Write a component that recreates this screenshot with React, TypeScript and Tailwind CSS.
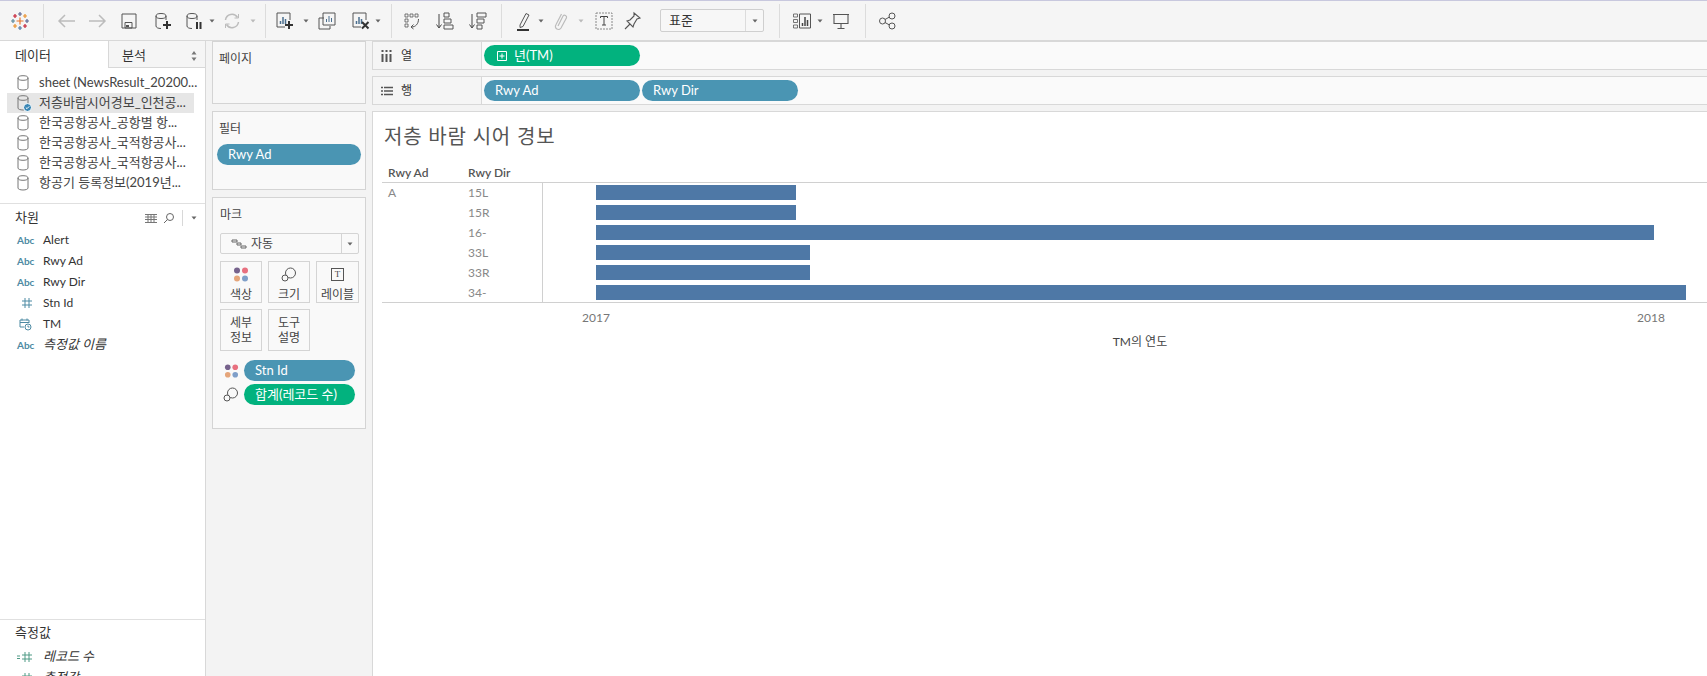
import type { ReactNode } from "react";

const FONT = "font-['Lato','Noto_Sans_CJK_KR',sans-serif]";

type IconProps = { className?: string };

function Ico({ className = "", children }: { className?: string; children: ReactNode }) {
  return (
    <svg viewBox="0 0 20 20" fill="none" stroke="#555" strokeWidth="1" className={`h-5 w-5 shrink-0 ${className}`}>
      {children}
    </svg>
  );
}

function Caret({ className = "", light = false }: { className?: string; light?: boolean }) {
  return (
    <svg viewBox="0 0 6 4" className={`h-1 w-1.5 shrink-0 ${className}`}>
      <path d="M0.5 0.5h5L3 3.5z" fill={light ? "#bbb" : "#666"} />
    </svg>
  );
}

function Sep({ className = "" }: IconProps) {
  return <div className={`h-[34px] w-px shrink-0 bg-[#dcdcdc] ${className}`} />;
}

function TableauLogo({ className = "" }: IconProps) {
  const plus = (x: number, y: number, r: number, c: string) => (
    <path key={`${x}-${y}`} d={`M${x - r} ${y}h${2 * r}M${x} ${y - r}v${2 * r}`} stroke={c} strokeWidth="1.2" />
  );
  return (
    <svg viewBox="0 0 20 20" fill="none" className={`h-5 w-5 shrink-0 ${className}`}>
      {plus(10, 10, 3.5, "#e8762c")}
      {plus(10, 3, 2, "#5b6591")}
      {plus(10, 17, 2, "#4e79a7")}
      {plus(3, 10, 2, "#59879b")}
      {plus(17, 10, 2, "#5b6591")}
      {plus(5, 5, 2, "#c72035")}
      {plus(15, 5, 2, "#eb912b")}
      {plus(5, 15, 2, "#eb912b")}
      {plus(15, 15, 2, "#c72035")}
    </svg>
  );
}

function Cyl({ stroke = "#555" }: { stroke?: string }) {
  return (
    <>
      <ellipse cx="8" cy="5" rx="5" ry="2.5" stroke={stroke} />
      <path d="M3 5v10c0 1.5 2 2.5 5 2.5M13 5v4" stroke={stroke} />
    </>
  );
}

function DataSourceIcon({ active = false }: { active?: boolean }) {
  return (
    <svg viewBox="0 0 16 18" fill="none" className="h-[18px] w-4 shrink-0">
      <ellipse cx="7" cy="4" rx="5" ry="2.3" stroke="#777" />
      <path d="M2 4v10c0 1.200 2.200 2 5 2s5-.8 5-2V4" stroke="#777" />
      {active && (
        <>
          <circle cx="11.500" cy="13.500" r="4" fill="#3a87b5" stroke="#fff" />
          <path d="M9.800 13.500l1.200 1.200 2.200-2.300" stroke="#fff" />
        </>
      )}
    </svg>
  );
}

function Chart({ className = "", children }: { className?: string; children?: ReactNode }) {
  return (
    <Ico className={className}>
      <path d="M15 9V2H2v14h8" />
      <path d="M5.500 13v-3M8 13V6M10.500 13V8" strokeWidth="1.500" stroke="#4b6f8f" />
      {children}
    </Ico>
  );
}

function Toolbar() {
  return (
    <div className="flex h-[41px] shrink-0 items-center border-y border-t-[#c8c8de] border-b-[#d8d8d8] bg-[#f5f5f5]">
      <TableauLogo className="ml-2.5" />
      <Sep className="ml-[13px]" />
      <Ico className="ml-3">
        <path d="M19 10H3M9 4l-6 6 6 6" stroke="#bcbcbc" strokeWidth="1.500" />
      </Ico>
      <Ico className="ml-3">
        <path d="M1 10h16M11 4l6 6-6 6" stroke="#bcbcbc" strokeWidth="1.500" />
      </Ico>
      <Ico className="ml-[11px]">
        <path d="M3 3h14v14H3z" />
        <path d="M6 11.500h7V17H6z" />
        <path d="M7 15h3" strokeWidth="2" />
      </Ico>
      <Ico className="ml-[14px]">
        <Cyl />
        <path d="M14 10v8M10 14h8" stroke="#333" strokeWidth="2" />
      </Ico>
      <Ico className="ml-[11px]">
        <Cyl />
        <path d="M13 11v7M16.500 11v7" stroke="#333" strokeWidth="2" />
      </Ico>
      <Caret className="ml-[5px]" />
      <Ico className="ml-[7px]">
        <path d="M3.500 9a6.500 6.500 0 0 1 12-2.500M16.500 11a6.500 6.500 0 0 1-12 2.500" stroke="#bcbcbc" strokeWidth="1.500" />
        <path d="M16.500 3v4h-4M3.500 17v-4h4" stroke="#bcbcbc" />
      </Ico>
      <Caret light className="ml-2" />
      <Sep className="ml-[9px]" />
      <Chart className="ml-[9px]">
        <path d="M14 10v8M10 14h8" stroke="#333" strokeWidth="2" />
      </Chart>
      <Caret className="ml-[8px]" />
      <Ico className="ml-[8px]">
        <path d="M7 7H2v11h11v-3" />
        <path d="M6 2h12v12H6z" />
        <path d="M9.500 11V8M12 11V5M14.500 11V7" stroke="#4b6f8f" />
      </Ico>
      <Chart className="ml-[14px]">
        <path d="M11 11l6.500 6.500M17.500 11L11 17.500" stroke="#333" strokeWidth="2" />
      </Chart>
      <Caret className="ml-1" />
      <Sep className="ml-[10px]" />
      <Ico className="ml-[10px]">
        <path d="M3 3h3v3H3zM8 3h3v3H8zM13 3h3v3h-3zM3 8h3v3H3zM3 13h3v3H3z" strokeWidth="0.800" />
        <path d="M16.500 8c0 5-3 8-7 8M11.500 13.500L9 16l2.500 2" />
      </Ico>
      <Ico className="ml-[13px]">
        <path d="M4 3v13M1.500 13.500L4 17l2.500-3.500" stroke="#444" />
        <path d="M9 2h5v4H9zM9 8h7v4H9zM9 14h9v4H9z" />
      </Ico>
      <Ico className="ml-[13px]">
        <path d="M4 3v13M1.500 13.500L4 17l2.500-3.500" stroke="#444" />
        <path d="M9 2h9v4H9zM9 8h7v4H9zM9 14h5v4H9z" />
      </Ico>
      <Sep className="ml-[13px]" />
      <Ico className="ml-3">
        <path d="M6 14L12 2.500l3 1.500-6 11.500-3 1z" />
        <path d="M3 19h12" stroke="#333" strokeWidth="2" />
      </Ico>
      <Caret className="ml-1" />
      <Ico className="ml-[7px]">
        <path
          d="M7 15L12 5a2 2 0 0 1 3.500 1.800L10 17a3 3 0 0 1-5.200-3L10.500 3"
          stroke="#bcbcbc"
          strokeWidth="1.200"
        />
      </Ico>
      <Caret light className="ml-[7px]" />
      <Ico className="ml-[10px]">
        <path d="M2 2h16v16H2z" strokeDasharray="2 1" stroke="#888" />
        <path d="M6.500 7V5.500h7V7M10 5.500V14M8 14h4" stroke="#444" />
      </Ico>
      <Ico className="ml-[9px]">
        <path d="M11 2l6 5-3 1-3 5-1 3-6-6 3-1 4-4zM7 13l-5 5" strokeWidth="1.100" />
      </Ico>
      <div className="ml-[17px] flex h-[23px] w-[104px] shrink-0 items-center rounded-[2px] border border-[#cfcfcf] bg-[#f7f7f7] text-[13px] text-[#333]">
        <span className="flex-1 pl-2">표준</span>
        <div className="flex h-full w-[18px] items-center justify-center border-l border-[#dcdcdc]">
          <Caret />
        </div>
      </div>
      <Sep className="ml-[15px]" />
      <Ico className="ml-3">
        <path d="M1.500 3h4v3h-4zM1.500 8.500h4v3h-4zM1.500 14h4v3h-4z" strokeWidth="0.800" />
        <path d="M7.500 3h11v14h-11z" />
        <path d="M10.500 15v-3M13 15V6M15.500 15V9" strokeWidth="1.500" stroke="#444" />
      </Ico>
      <Caret className="ml-[5px]" />
      <Ico className="ml-[8px]">
        <path d="M2 3.500h16M3 3.500v9h14v-9M10 12.500V17M6.500 17.500h7" strokeWidth="1.100" />
      </Ico>
      <Sep className="ml-[14px]" />
      <Ico className="ml-3">
        <circle cx="4.500" cy="10" r="3" />
        <circle cx="14" cy="5" r="3" />
        <circle cx="14" cy="15" r="3" />
        <path d="M7 8.500l4.500-2.500M7 11.500l4.500 2.500" />
      </Ico>
    </div>
  );
}

const DATA_SOURCES = [
  "sheet (NewsResult_20200...",
  "저층바람시어경보_인천공...",
  "한국공항공사_공항별 항...",
  "한국공항공사_국적항공사...",
  "한국공항공사_국적항공사...",
  "항공기 등록정보(2019년...",
];

function AbcTag() {
  return <span className="w-[17px] text-[10px] font-bold leading-none text-[#4d8aa3]">Abc</span>;
}

function HashTag({ color = "#4d8aa3", calc = false }: { color?: string; calc?: boolean }) {
  return (
    <svg viewBox="0 0 17 12" fill="none" stroke={color} className="h-3 w-[17px]">
      <path d="M5 4h10M5 8h10M8 1v10M12 1v10" />
      {calc && <path d="M0 5h3M0 7.500h3" />}
    </svg>
  );
}

function DateTag() {
  return (
    <svg viewBox="0 0 17 14" fill="none" stroke="#4d8aa3" className="h-3.5 w-[17px]">
      <path d="M7 10H3V3h9v3M3 5.500h9M5 1.500v2M10 1.500v2" />
      <circle cx="11" cy="10" r="3" />
      <path d="M11 8.500V10h1.500" />
    </svg>
  );
}

function Field({ tag, label, italic = false }: { tag: ReactNode; label: string; italic?: boolean }) {
  return (
    <div className={`flex h-[21px] items-center pl-[17px] text-[#333] ${italic ? "text-[13px]" : "text-[12px]"}`}>
      <div className="flex w-[26px] shrink-0 items-center">{tag}</div>
      <span className={italic ? "italic" : ""}>{label}</span>
    </div>
  );
}

function Sidebar() {
  return (
    <div className="flex w-[206px] shrink-0 flex-col border-r border-[#d8d8d8] bg-white text-[#333]">
      <div className="flex h-[27px] shrink-0 text-[13px]">
        <div className="flex w-[108px] items-center pl-[15px] pt-[3px]">데이터</div>
        <div className="flex flex-1 items-center justify-between border-b border-l border-[#d8d8d8] bg-[#f5f5f5] pl-[13px] pr-2 pt-[3px]">
          <span>분석</span>
          <svg viewBox="0 0 6 10" className="h-2.5 w-1.5">
            <path d="M3 0l2.500 3.500h-5zM3 10L.5 6.500h5z" fill="#777" />
          </svg>
        </div>
      </div>
      <div className="shrink-0 pt-[5px]">
        {DATA_SOURCES.map((name, i) => (
          <div
            key={i}
            className={`mx-[7px] flex h-5 w-[187px] items-center gap-[7px] pl-[9px] text-[13px] text-[#444] ${i === 1 ? "bg-[#e6e6e6]" : ""}`}
          >
            <DataSourceIcon active={i === 1} />
            <span className="whitespace-nowrap">{name}</span>
          </div>
        ))}
      </div>
      <div className="mt-[10px] flex-1 border-t border-[#e0e0e0]">
        <div className="flex h-[27px] items-center pl-[15px] pr-2 pt-[1px]">
          <span className="flex-1 text-[13px]">차원</span>
          <svg viewBox="0 0 12 9" fill="none" stroke="#777" className="h-[9px] w-3">
            <path d="M0 .5h12M0 3h12M0 5.500h12M0 8.500h12M3 0v9M6 0v9M9 0v9" />
          </svg>
          <svg viewBox="0 0 12 12" fill="none" stroke="#666" className="ml-[6px] h-3 w-3">
            <circle cx="7" cy="5" r="3.500" />
            <path d="M4.500 7.500L1 11" />
          </svg>
          <div className="ml-[7px] h-4 w-px bg-[#d8d8d8]" />
          <Caret className="ml-2" />
        </div>
        <div className="-mt-[2px]">
          <Field tag={<AbcTag />} label="Alert" />
          <Field tag={<AbcTag />} label="Rwy Ad" />
          <Field tag={<AbcTag />} label="Rwy Dir" />
          <Field tag={<HashTag />} label="Stn Id" />
          <Field tag={<DateTag />} label="TM" />
          <Field tag={<AbcTag />} label="측정값 이름" italic />
        </div>
      </div>
      <div className="h-[57px] shrink-0 overflow-hidden border-t border-[#e0e0e0]">
        <div className="flex h-[26px] items-center pl-[15px] text-[13px]">측정값</div>
        <Field tag={<HashTag color="#4f9a85" calc />} label="레코드 수" italic />
        <Field tag={<HashTag color="#4f9a85" />} label="측정값" italic />
      </div>
    </div>
  );
}

function Pill({ color, className = "", children }: { color: "blue" | "green"; className?: string; children: ReactNode }) {
  const bg = color === "blue" ? "bg-[#4a95b3]" : "bg-[#02b27e]";
  return (
    <div className={`flex h-[21px] shrink-0 items-center rounded-full text-[13px] text-white ${bg} ${className}`}>
      {children}
    </div>
  );
}

function Dots({ small = false }: { small?: boolean }) {
  return (
    <svg viewBox="0 0 16 15" className={small ? "h-[14px] w-[15px]" : "h-[15px] w-4"}>
      <circle cx="4" cy="3.500" r="3" fill="#76628c" />
      <circle cx="12" cy="3.500" r="3" fill="#e8707f" />
      <circle cx="4" cy="11.500" r="3" fill="#e5a57a" />
      <circle cx="12" cy="11.500" r="3" fill="#7f9fc9" />
    </svg>
  );
}

function SizeIcon() {
  return (
    <svg viewBox="0 0 16 15" fill="none" stroke="#555" className="h-[15px] w-4">
      <circle cx="9.500" cy="6" r="5" />
      <circle cx="4" cy="11" r="3" fill="#f8f8f8" />
    </svg>
  );
}

function MarkButton({ icon, label }: { icon: ReactNode; label: string }) {
  return (
    <div className="flex h-[42px] flex-col items-center border border-[#d4d4d4] pt-[5px] text-[12px] leading-[14px] text-[#444]">
      <div className="flex h-[15px] items-center">{icon}</div>
      <span className="mt-[6px]">{label}</span>
    </div>
  );
}

function TextMarkButton({ top, bottom }: { top: string; bottom: string }) {
  return (
    <div className="flex h-[42px] flex-col items-center justify-center border border-[#d4d4d4] text-[12px] leading-[15px] text-[#444]">
      <span>{top}</span>
      <span>{bottom}</span>
    </div>
  );
}

function CardsColumn() {
  return (
    <div className="ml-[6px] flex w-[154px] shrink-0 flex-col gap-[7px]">
      <div className="h-[63px] border border-[#d4d4d4] bg-[#f7f7f7] pl-[6px] pt-[8px] text-[12px] text-[#444]">
        페이지
      </div>
      <div className="h-[79px] border border-[#d4d4d4] bg-[#f9f9f9] pl-[6px] pt-[8px] text-[12px] text-[#444]">
        <div>필터</div>
        <Pill color="blue" className="-ml-[2px] mt-[6px] w-[144px] pl-[11px]">
          Rwy Ad
        </Pill>
      </div>
      <div className="h-[232px] border border-[#d4d4d4] bg-[#f9f9f9] pl-[7px] pr-[6px] pt-[8px] text-[12px] text-[#444]">
        <div>마크</div>
        <div className="mt-[9px] flex h-[21px] w-[139px] items-center rounded-[2px] border border-[#d4d4d4]">
          <svg viewBox="0 0 16 10" fill="none" stroke="#666" className="ml-[10px] h-2.5 w-4">
            <path d="M1 1h5v2H1zM6 4h4v2H6zM10 7h5v2h-5z" />
          </svg>
          <span className="ml-[4px] flex-1 text-[12px]">자동</span>
          <div className="flex h-full w-[17px] items-center justify-center border-l border-[#d4d4d4]">
            <Caret />
          </div>
        </div>
        <div className="mt-[7px] grid w-[139px] grid-cols-[42px_42px_43px] gap-x-[6px] gap-y-[6px]">
          <MarkButton icon={<Dots />} label="색상" />
          <MarkButton icon={<SizeIcon />} label="크기" />
          <MarkButton
            icon={
              <div className="flex h-[13px] w-[13px] items-center justify-center border border-[#555] font-['Liberation_Serif',serif] text-[9px] leading-none">
                T
              </div>
            }
            label="레이블"
          />
          <TextMarkButton top="세부" bottom="정보" />
          <TextMarkButton top="도구" bottom="설명" />
        </div>
        <div className="mt-[9px] flex items-center">
          <div className="flex w-6 justify-center pr-[2px]">
            <Dots small />
          </div>
          <Pill color="blue" className="w-[111px] pl-[11px]">
            Stn Id
          </Pill>
        </div>
        <div className="mt-[3px] flex items-center">
          <div className="flex w-6 justify-center pr-[2px]">
            <SizeIcon />
          </div>
          <Pill color="green" className="w-[111px] pl-[11px]">
            합계(레코드 수)
          </Pill>
        </div>
      </div>
    </div>
  );
}

function Shelf({ icon, label, children }: { icon: ReactNode; label: string; children: ReactNode }) {
  return (
    <div className="flex h-[29px] shrink-0 border-y border-l border-[#d8d8d8]">
      <div className="flex w-[109px] shrink-0 items-center border-r border-[#d8d8d8] bg-[#f5f5f5] pl-2 text-[12px] text-[#333]">
        <div className="flex w-[20px] items-center">{icon}</div>
        {label}
      </div>
      <div className="flex flex-1 items-start gap-0.5 bg-[#fafafa] pl-[2px] pt-[3px]">{children}</div>
    </div>
  );
}

const BARS = [
  { dir: "15L", width: 200 },
  { dir: "15R", width: 200 },
  { dir: "16-", width: 1058 },
  { dir: "33L", width: 214 },
  { dir: "33R", width: 214 },
  { dir: "34-", width: 1090 },
];

function ViewCard() {
  return (
    <div className="min-h-0 flex-1 border-l border-t border-[#d8d8d8] bg-white pl-[9px]">
      <div className="h-[47px] pl-[2px] pt-[9px] text-[20px] leading-[30px] tracking-[0.8px] text-[#555]">
        저층 바람 시어 경보
      </div>
      <div className="flex h-[24px] items-end border-b border-[#d0d0d0] pb-[1px] text-[12px] font-semibold leading-[16px] text-[#555]">
        <span className="w-[86px] pl-[6px]">Rwy Ad</span>
        <span>Rwy Dir</span>
      </div>
      <div className="flex h-[120px] border-b border-[#d0d0d0]">
        <div className="flex w-[161px] shrink-0 border-r border-[#d0d0d0] pt-[2px] text-[12px] leading-[15px] text-[#888]">
          <div className="w-[86px] pl-[6px]">A</div>
          <div className="flex flex-col gap-[5px]">
            {BARS.map((b) => (
              <div key={b.dir} className="h-[15px]">
                {b.dir}
              </div>
            ))}
          </div>
        </div>
        <div className="flex flex-1 flex-col gap-[5px] pl-[53px] pt-[2px]">
          {BARS.map((b) => (
            <div key={b.dir} className="h-[15px] bg-[#4e78a6]" style={{ width: b.width }} />
          ))}
        </div>
      </div>
      <div className="flex pl-[200px] pt-[7px] text-[12px] leading-[15px] text-[#777]">
        <span className="w-[1055px]">2017</span>
        <span>2018</span>
      </div>
      <div className="w-[1516px] pt-[10px] text-center text-[12px] leading-[14px] text-[#444]">TM의 연도</div>
    </div>
  );
}

export default function App() {
  return (
    <div className={`flex h-[676px] w-[1707px] flex-col overflow-hidden bg-[#f3f3f3] ${FONT}`}>
      <Toolbar />
      <div className="flex min-h-0 flex-1">
        <Sidebar />
        <CardsColumn />
        <div className="ml-[6px] flex min-w-0 flex-1 flex-col">
          <Shelf
            label="열"
            icon={
              <svg viewBox="0 0 11 12" fill="none" stroke="#555" strokeWidth="2" className="h-3 w-[11px]">
                <path d="M1.500 4v8M5.500 4v8M9.500 4v8M1.500 0v2M5.500 0v2M9.500 0v2" />
              </svg>
            }
          >
            <Pill color="green" className="w-[156px] gap-[7px] pl-[13px]">
              <svg viewBox="0 0 10 10" fill="none" stroke="#fff" className="h-2.5 w-2.5">
                <path d="M.5.5h9v9h-9zM5 2.500v5M2.500 5h5" />
              </svg>
              년(TM)
            </Pill>
          </Shelf>
          <div className="h-[6px] shrink-0" />
          <Shelf
            label="행"
            icon={
              <svg viewBox="0 0 12 10" fill="none" stroke="#555" className="h-2.5 w-3">
                <path d="M0 1.500h2M3 1.500h9M0 5h2M3 5h9M0 8.500h2M3 8.500h9" strokeWidth="1.300" />
              </svg>
            }
          >
            <Pill color="blue" className="w-[156px] pl-[11px]">
              Rwy Ad
            </Pill>
            <Pill color="blue" className="w-[156px] pl-[11px]">
              Rwy Dir
            </Pill>
          </Shelf>
          <div className="h-[6px] shrink-0" />
          <ViewCard />
        </div>
      </div>
    </div>
  );
}
